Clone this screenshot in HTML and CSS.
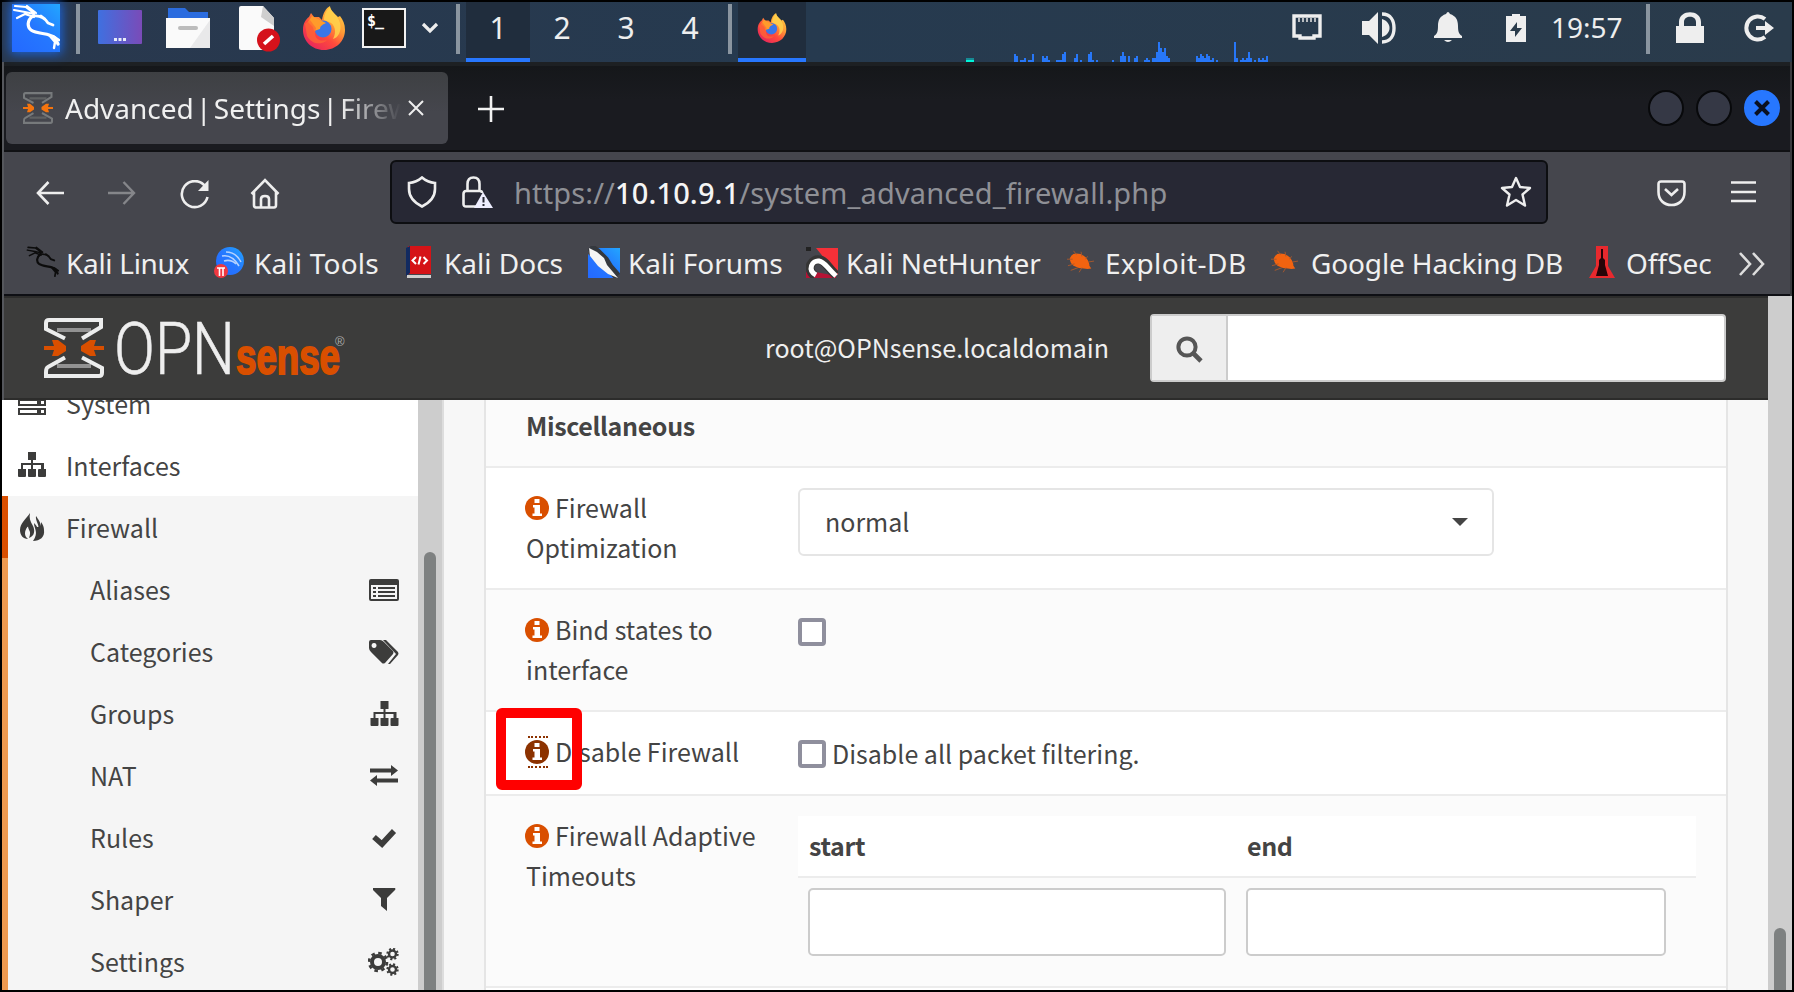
FILE: index.html
```html
<!DOCTYPE html>
<html lang="en">
<head>
<meta charset="utf-8">
<title>Advanced | Settings | Firewall</title>
<link rel="stylesheet" href="styles.css">
</head>
<body>
<svg class="defs" width="0" height="0">
  <defs>
    <linearGradient id="kali" x1="0" y1="1" x2="1" y2="0"><stop offset="0" stop-color="#2469ff"/><stop offset=".5" stop-color="#2577ff"/><stop offset="1" stop-color="#22a6ff"/></linearGradient>
    <linearGradient id="desk"><stop offset="0" stop-color="#3f70e0"/><stop offset="1" stop-color="#7a4bb8"/></linearGradient>
    <linearGradient id="fox" x1="1" y1="0" x2="0.2" y2="1"><stop offset="0" stop-color="#ffe14c"/><stop offset=".4" stop-color="#ff9a35"/><stop offset=".65" stop-color="#ff4a3c"/><stop offset="1" stop-color="#e5245e"/></linearGradient>
    <symbol id="firefox" viewBox="0 0 44 44">
      <path fill="url(#fox)" d="M22 44C10 44 1 35 1 24C1 17 4 13 7 11L9 7L12 11L17 11L20 14C21 7 24 2 28 0C28 4 32 7 36 11L38 10C41 14 43 18 43 24C43 35 34 44 22 44Z"/>
      <circle cx="21" cy="23" r="8.500" fill="#3a76e8"/>
      <path fill="#ff9b2b" d="M6 16L10 10L20 15L24 17C20 19 18 20 18 23L12 25L11 21Z"/>
      <path fill="#ff6a33" d="M3 18L8 14L14 22L13 27C13 33 18 36 25 34C20 39 10 39 5 30Z" opacity=".7"/>
      <path fill="#ffd24c" d="M28 1C29 6 36 9 38 17C40 25 36 32 31 33C35 26 33 18 27 16L22 14C22 8 25 4 28 1Z" opacity=".85"/>
    </symbol>
    <symbol id="dragon" viewBox="0 0 48 48">
      <g fill="none" stroke="currentColor" stroke-linecap="round" stroke-linejoin="round">
        <path stroke-width="2.200" d="M3 2L14 3L22 9M2 6L13 8L22 10M5 14L13 10L22 13M15 2L24 9"/>
        <path stroke-width="3.200" d="M21 12C15 16 15 23 19 26C26 31 37 28 43 34L46 40"/>
        <path stroke-width="2.800" d="M21 12C28 11 33 14 36 19L41 21M29 12L33 15"/>
        <path stroke-width="2.400" d="M37 31L43 38L42 44M41 32L47 36"/>
      </g>
    </symbol>
    <symbol id="bug" viewBox="0 0 30 28">
      <path fill="#f26310" d="M3 10Q5 5 10 5Q16 5 20 9Q24 14 24 18L26 21Q22 22 18 21Q12 21 7 18Q3 15 3 10Z"/>
      <path stroke="#a8582c" stroke-width="1" fill="none" d="M7 2L10 6M15 3L16 8M22 8L20 11M29 13L23 14M1 18L8 16M4 23L12 20M13 25L16 20M0 11L6 11"/>
    </symbol>
    <symbol id="sitemap" viewBox="0 0 28 26">
      <path fill="currentColor" d="M10 0h8v8h-3v3h11v6h2v7q0 1-1 1h-6q-1 0-1-1v-6q0-1 1-1h2v-4h-8v4h3v7q0 1-1 1h-6q-1 0-1-1v-7h3v-4H5v4h3v7q0 1-1 1H1q-1 0-1-1v-7h3v-6h10v-3h-3z"/>
    </symbol>
    <symbol id="info" viewBox="0 0 24 24">
      <circle cx="12" cy="12" r="12" fill="currentColor"/>
      <path fill="#fff" d="M9.500 3h5v4h-5zM8 9h7v8.500h2V20H7.500v-2.500H9.500V11.500H8z"/>
    </symbol>
    <symbol id="gate" viewBox="0 0 60 60">
      <path class="gate-dark" fill="none" stroke-width="4" d="M13 12H47M13 48H47"/>
      <path class="gate-frame" fill="none" stroke-width="4" d="M21 20.500L2 11V5Q2 2 5 2H57V9L38 20.500M21 39.500L4 49Q2 50 2 54V58H55Q58 58 58 55V50L38 39.500"/>
      <path class="gate-arrow" d="M0 28h10L8 22h6l8 6v5l-8 5H8l2-6H0zM60 28H50L52 22h-6l-9 6v5l9 5h6l-2-6h10z"/>
    </symbol>
  </defs>
</svg>

<div class="screen">
  <div class="panel">
    <div class="kali-menu"><svg width="48" height="48"><rect width="48" height="48" fill="url(#kali)"/><use href="#dragon" width="48" height="48"/></svg></div>
    <i class="sep sep-a"></i>
    <div class="launchers">
      <svg class="l-desk" width="44" height="34"><rect width="44" height="34" rx="1" fill="url(#desk)"/><path fill="#e8ecf8" d="M16 28h3v3h-3zM20.500 28h3v3h-3zM25 28h3v3h-3z"/></svg>
      <svg class="l-files" width="44" height="40"><path fill="#2b6cdf" d="M2 0h17l4 4h19v10H2z"/><path fill="#fafafa" d="M0 10h44v30H0z"/><path fill="#e9e9ea" d="M44 12v28H24z"/><rect x="12" y="18" width="20" height="4" rx="2" fill="#bcbcbc"/></svg>
      <svg class="l-edit" width="42" height="46"><path fill="#fafafa" d="M2 0h22l11 12v32H2q-2 0-2-2V2q0-2 2-2z"/><path fill="#cfcfcf" d="M24 0l11 12v8L22 11z"/><circle cx="29.500" cy="34" r="11.500" fill="#d5121b"/><path d="M25 38l9-8" stroke="#fff" stroke-width="3.600"/></svg>
      <svg class="l-fox" width="44" height="44"><use href="#firefox"/></svg>
      <div class="l-term">$_</div>
      <svg class="l-more" width="18" height="12"><path d="M2 2l7 7 7-7" fill="none" stroke="#eee" stroke-width="3.200"/></svg>
    </div>
    <i class="sep sep-b"></i>
    <div class="spaces"><span class="space active">1</span><span class="space">2</span><span class="space">3</span><span class="space">4</span></div>
    <i class="sep sep-c"></i>
    <div class="task"><svg width="30" height="30"><use href="#firefox"/></svg></div>
    <svg class="graph" width="304" height="24"><path fill="#168b94" d="M0 20h8v2H0z"/><path fill="#00f5d9" d="M0 22h8v2H0z"/>
      <path fill="#2777f8" d="M48 24V16h2v2h2v6zM54 24v-2h4v-2h2v4zM62 24v-2h4v-6h2v8zM76 24v-6h2v2h2v-2h2v4h2v2zM90 24v-2h6v-6h2v-2h2v10zM108 24v-4h2v-4h2v8zM114 22h2v2h-2zM122 24v-8h2v-2h2v8h2v2zM130 22h2v2h-2zM146 22h2v2h-2zM154 24v-6h2v-4h2v4h2v6zM162 18h2v6h-2zM168 24v-4h2v-2h2v6zM178 24v-2h2v-2h2v2h2v2zM186 24v-4h4v-6h2V4h2v6h2v4h2v-4h2v8h2v2h2v4zM230 24v-6h2v2h2v-4h2v2h2v2h2v-4h2v2h2v6zM244 24v-2h2v-2h2v4zM250 22h2v2h-2zM268 24V4h2v16h2v4zM274 24v-2h2v-2h2v2h2v-2h2v-6h2v6h2v4zM288 22h2v2h-2zM292 24v-4h2v2h2v-2h2v2h2v-4h2v6z"/></svg>
    <div class="tray">
      <svg class="t-net" width="30" height="26"><path fill="none" stroke="#eee" stroke-width="3.400" d="M2 2H28V22H22V24H8V22H2Z"/><path stroke="#ddd" stroke-width="1.600" d="M7 4v4M11 4v4M15 4v4M19 4v4M23 4v4"/></svg>
      <svg class="t-vol" width="35" height="32"><path fill="#eee" d="M0 9h7L16 0v32L7 23H0z"/><path fill="none" stroke="#eee" stroke-width="3.400" d="M20 2C29 2 32 9 32 16S29 30 20 30"/><path fill="#eee" d="M20 7C30 10 30 22 20 25z"/></svg>
      <svg class="t-bell" width="28" height="31"><path fill="#eee" d="M12 2q2-4 4 0C22 4 24 8 24 14C24 20 25 22 28 24v2H0v-2C3 22 4 20 4 14C4 8 6 4 12 2zM10 28h8q-4 4-8 0z"/></svg>
      <svg class="t-bat" width="20" height="28"><path fill="#eee" d="M6 0h8v2h6v26H0V2h6z"/><path fill="#2a3b4b" d="M11 8L4 17h5v6l7-9h-5z"/></svg>
      <span class="clock">19:57</span>
      <i class="sep sep-d"></i>
      <svg class="t-lock" width="28" height="31"><path fill="#eee" d="M0 14h3V10C3-3 25-3 25 10v4h3v17H0zM8 14h12v-4C20 3 8 3 8 10z"/></svg>
      <svg class="t-out" width="30" height="28"><path fill="none" stroke="#eee" stroke-width="4" d="M21 5A11.500 11.500 0 1 0 21 23"/><path fill="#eee" d="M12 12h9V7l9 7-9 7v-5h-9z"/></svg>
    </div>
  </div>

  <div class="browser">
    <div class="titlebar">
      <div class="tab">
        <svg class="tab-icon" width="30" height="32" viewBox="0 0 60 60" preserveAspectRatio="none"><use href="#gate"/></svg>
        <span class="tab-title">Advanced | Settings | Firewall</span>
        <svg class="tab-close" width="16" height="16"><path d="M1 1L15 15M15 1L1 15" stroke="#eee" stroke-width="2"/></svg>
      </div>
      <svg class="newtab" width="26" height="26"><path d="M13 0V26M0 13H26" stroke="#f2f2f2" stroke-width="2.600"/></svg>
      <div class="winbtns"><i class="wb"></i><i class="wb"></i><i class="wb close"><svg width="16" height="16"><path d="M1.500 1.500L14.500 14.500M14.500 1.500L1.500 14.500" stroke="#0a1020" stroke-width="4"/></svg></i></div>
    </div>

    <div class="navbar">
      <svg class="n-back" width="28" height="24"><path d="M12.500 1L2 12L12.500 23M2 12H28" fill="none" stroke="#eee" stroke-width="2.600"/></svg>
      <svg class="n-fwd" width="28" height="24"><path d="M15.500 1L26 12L15.500 23M0 12H26" fill="none" stroke="#85868a" stroke-width="2.400"/></svg>
      <svg class="n-reload" width="30" height="30"><path d="M25 6A13 13 0 1 0 27.500 17" fill="none" stroke="#eee" stroke-width="2.600"/><path fill="#eee" d="M28.500 0V11H18Z"/></svg>
      <svg class="n-home" width="30" height="31"><path d="M1.500 16L15 2L28.500 16M4 14V27Q4 29.500 6 29.500H24Q26 29.500 26 27V14M11 29V21Q11 18 15 18T19 21V29" fill="none" stroke="#eee" stroke-width="2.600"/></svg>
      <div class="urlbar">
        <svg class="u-shield" width="30" height="32"><path d="M15 1.500C11 5 7 6.500 2 7V13C2 22 8 27 15 30.500C22 27 28 22 28 13V7C23 6.500 19 5 15 1.500Z" fill="none" stroke="#eee" stroke-width="2.600"/></svg>
        <svg class="u-lock" width="31" height="32"><path d="M14 30.500H4Q1.500 30.500 1.500 28V18Q1.500 15 4 15H18Q20 15 20 17M5.500 15V8Q5.500 1.500 11.500 1.500T17.500 8V15" fill="none" stroke="#eee" stroke-width="2.600"/><path fill="#eef" d="M21 16L31 32H12Z"/><path stroke="#272834" stroke-width="2" d="M21.500 21V26.500M21.500 28V30"/></svg>
        <span class="url">https://<b>10.10.9.1</b>/system_advanced_firewall.php</span>
        <svg class="u-star" width="32" height="32" viewBox="0 0 32 32"><path d="M16 2L20 11L30 12L22.500 18.500L25 29.500L16 24L7 29.500L9.500 18.500L2 12L12 11Z" fill="none" stroke="#eee" stroke-width="2.400" stroke-linejoin="round"/></svg>
      </div>
      <svg class="n-pocket" width="29" height="27"><path d="M1.500 4Q1.500 1.500 4 1.500H25Q27.500 1.500 27.500 4V12C27.500 20 22 25 14.500 25S1.500 20 1.500 12ZM8 9L14.500 15L21 9" fill="none" stroke="#eee" stroke-width="2.600"/></svg>
      <svg class="n-menu" width="25" height="22"><path d="M0 1.500H25M0 11H25M0 20H25" stroke="#eee" stroke-width="2.600"/></svg>
    </div>

    <div class="bookmarks">
      <div class="bm bm1"><svg class="dark" width="33" height="33"><use href="#dragon"/></svg><span>Kali Linux</span></div>
      <div class="bm bm2"><svg width="30" height="32"><circle cx="16" cy="15" r="14" fill="url(#kali)"/><path d="M8 10Q18 8 25 20M12 6Q22 6 27 16M10 15Q17 13 22 18" fill="none" stroke="#b5d2ff" stroke-width="1.600"/><circle cx="7" cy="25" r="7" fill="#ef3840"/><path d="M3 22H11M5.500 22V30M9 22V30" stroke="#fff" stroke-width="1.600"/></svg><span>Kali Tools</span></div>
      <div class="bm bm3"><svg width="26" height="32"><path fill="#d51317" d="M2 0H25V28H2z"/><path fill="#122a60" d="M0 2L4 0V27L0 30z"/><path fill="#cfcfcf" d="M1 29H25v3H1z"/><path d="M10 11L6.500 14.500L10 18M17.500 11L21 14.500L17.500 18M14.500 10.500L12.500 18.500" fill="none" stroke="#fff" stroke-width="2"/></svg><span>Kali Docs</span></div>
      <div class="bm bm4"><svg width="32" height="32"><path fill="url(#kali)" d="M0 8V32H26zM8 2H32V28z"/><path d="M2 1L9 6L17 14L22 22L29 30" fill="none" stroke="#34383e" stroke-width="8"/><path fill="#f4f4f4" d="M1 2L9 6L16 12L19 19L30 32L20 28L10 20L2 10z"/></svg><span>Kali Forums</span></div>
      <div class="bm bm5"><svg width="32" height="32"><path fill="#f53038" d="M10 2H32V29z"/><path fill="#b51335" d="M0 32V24L30 30V32z"/><path d="M9 30C-1 23 6 12 14 14C20 15 20 20 30 29" fill="none" stroke="#353535" stroke-width="9"/><path d="M10 29C1 24 6 14 13 15C19 16 20 21 30 30" fill="none" stroke="#fff" stroke-width="5"/><path fill="#222" d="M0 1H5V5H0z"/></svg><span>Kali NetHunter</span></div>
      <div class="bm bm6"><svg width="28" height="28"><use href="#bug"/></svg><span>Exploit-DB</span></div>
      <div class="bm bm7"><svg width="28" height="28"><use href="#bug"/></svg><span>Google Hacking DB</span></div>
      <div class="bm bm8"><svg width="26" height="32"><path fill="#e8292e" d="M7 0H19V20L26 32H0L7 20z"/><path fill="#260408" d="M12 3H14V12L16 14V19L19 30H7L10 19V14L12 12z"/></svg><span>OffSec</span></div>
      <svg class="bm-more" width="26" height="24"><path d="M1 1L11 12L1 23M14 1L24 12L14 23" fill="none" stroke="#ddd" stroke-width="2.600"/></svg>
    </div>

    <div class="page">
      <div class="main">
        <header class="head">
          <svg class="brand" width="300" height="64"><svg class="gate-light" x="0" y="0" width="60" height="60" viewBox="0 0 60 60"><use href="#gate"/></svg>
            <text class="brand-opn" x="70" y="55.500" textLength="121" lengthAdjust="spacingAndGlyphs">OPN</text>
            <text class="brand-sense" x="192" y="55.500" textLength="104" lengthAdjust="spacingAndGlyphs">sense</text><text class="brand-r" x="291" y="28">®</text></svg>
          <span class="user">root@OPNsense.localdomain</span>
          <div class="search"><span class="search-icon"><svg width="28" height="28"><circle cx="11" cy="11" r="8.600" fill="none" stroke="#555" stroke-width="4"/><path d="M17 17L25 25" stroke="#555" stroke-width="4.600"/></svg></span><span class="search-input"></span></div>
        </header>
        <div class="body">
          <nav class="side">
            <div class="item clipped"><svg width="28" height="26"><path fill="#3c3c3b" d="M0 0h28v7H0zM0 9h28v7H0zM0 18h28v7H0z"/><path fill="#fff" d="M2 11h17v3H2zM2 20h17v3H2zM23 11h3v3h-3zM23 20h3v3h-3z"/></svg><span>System</span></div>
            <div class="item"><svg width="28" height="26"><use href="#sitemap"/></svg><span>Interfaces</span></div>
            <div class="item current"><svg width="28" height="28"><path fill="#3c3c3b" d="M12 0C8 6 2 10 2 17C2 22 5 26 10 26C6 23 6 18 10 13C10 18 14 17 11 25C17 23 17 17 15 13C12 8 11 5 12 0zM18 3C17 8 22 12 20 16C19 13 17 11 16 10C16 16 21 19 15 28C22 28 27 24 26 17C26 14 25 12 23 9L23 13C22 8 20 6 18 3z"/><path fill="#3c3c3b" d="M3 16Q8 12 11 6L13 12L9 14Q5 18 7 24Q3 22 3 16zM19 14L24 14Q25 21 19 26z"/></svg><span>Firewall</span></div>
            <div class="sub">
              <div class="item"><span>Aliases</span><svg width="30" height="22"><path fill="#3c3c3b" fill-rule="evenodd" d="M2 0H28Q30 0 30 2V20Q30 22 28 22H2Q0 22 0 20V2Q0 0 2 0zM2 6V20H28V6z"/><path stroke="#3c3c3b" stroke-width="1.800" d="M4 9h3M9 9h17M4 13h3M9 13h17M4 17h3M9 17h17"/></svg></div>
              <div class="item"><span>Categories</span><svg width="30" height="24"><path fill="#3c3c3b" fill-rule="evenodd" d="M2 0H11Q13 0 15 2L24 11Q25 13 24 14L16 23Q14 24 13 23L2 12Q0 10 0 8V2Q0 0 2 0zM5 3a2.500 2.500 0 1 0 .1 0z"/><path fill="#3c3c3b" d="M14 0H17L29 12Q30 14 29 15L21 24H19L27 14z"/></svg></div>
              <div class="item"><span>Groups</span><svg width="29" height="26"><use href="#sitemap"/></svg></div>
              <div class="item"><span>NAT</span><svg width="30" height="21"><path fill="#3c3c3b" d="M1 3.500H22V0L29 5.500L22 11V7.500H1zM29 13.500H8V10L1 15.500L8 21V17.500H29z"/></svg></div>
              <div class="item"><span>Rules</span><svg width="30" height="20"><path d="M5 9L13 16L25 3" fill="none" stroke="#3c3c3b" stroke-width="5.600"/></svg></div>
              <div class="item"><span>Shaper</span><svg width="30" height="23"><path fill="#3c3c3b" d="M4 0H26Q27 1 26 2L18 10V23L12 18V10L4 2z"/></svg></div>
              <div class="item"><span>Settings</span><svg width="31" height="28"><g fill="none" stroke="#3c3c3b"><circle cx="10" cy="14" r="6" stroke-width="4"/><circle cx="10" cy="14" r="9" stroke-width="2.600" stroke-dasharray="3.530"/><circle cx="24.500" cy="6" r="3.500" stroke-width="2.400"/><circle cx="24.500" cy="6" r="5.200" stroke-width="2" stroke-dasharray="2.040"/><circle cx="24.500" cy="21.500" r="3.500" stroke-width="2.400"/><circle cx="24.500" cy="21.500" r="5.200" stroke-width="2" stroke-dasharray="2.040"/></g></svg></div>
            </div>
          </nav>
          <div class="side-scroll"><i></i></div>
          <div class="content">
            <div class="table">
              <div class="row r-head alt"><b>Miscellaneous</b></div>
              <div class="row r-opt"><div class="label"><svg class="info" width="24" height="24"><use href="#info"/></svg>Firewall<br>Optimization</div><div class="select"><span>normal</span><i class="caret"></i></div></div>
              <div class="row r-bind alt"><div class="label"><svg class="info" width="24" height="24"><use href="#info"/></svg>Bind states to<br>interface</div><i class="check"></i></div>
              <div class="row r-dis"><div class="label"><svg class="info focus" width="24" height="24"><use href="#info"/></svg>Disable Firewall<i class="focus-ring"></i><i class="mark"></i></div><i class="check"></i><span class="check-label">Disable all packet filtering.</span></div>
              <div class="row r-adapt alt"><div class="label"><svg class="info" width="24" height="24"><use href="#info"/></svg>Firewall Adaptive<br>Timeouts</div>
                <div class="inner"><div class="inner-head"><b>start</b><b>end</b></div><div class="inner-row"><i class="field"></i><i class="field wide"></i></div></div></div>
              <div class="row r-next"></div>
            </div>
          </div>
        </div>
      </div>
      <div class="page-scroll"><i></i></div>
    </div>
  </div>
</div>
</body>
</html>
```
FILE: styles.css
```css
* { box-sizing: border-box; }
body { margin: 0; background: #000; font-family: "Noto Sans", sans-serif; overflow: hidden; }
i { font-style: normal; display: block; flex: none; }
svg { display: block; flex: none; }
.defs { position: absolute; }
.screen { width: 1794px; height: 992px; padding: 2px; background: #000; overflow: hidden; }

/* desktop panel */
.panel { height: 60px; display: flex; align-items: flex-start; background: linear-gradient(90deg, #29384e, #263a4f 45%, #2a3b4b); color: #eee; }
.kali-menu { margin: 2px 0 0 10px; color: #fff; box-shadow: 0 0 10px 2px #1c63d8; }
.sep { width: 4px; height: 50px; margin-top: 2px; background: #8a95a0; }
.sep-a { margin-left: 16px; }
.launchers { display: flex; width: 376px; }
.l-desk { margin: 8px 0 0 18px; }
.l-files { margin: 6px 0 0 24px; }
.l-edit { margin: 4px 0 0 29px; }
.l-fox { margin: 4px 0 0 21px; }
.l-term { width: 44px; height: 40px; margin: 6px 0 0 16px; border: 2px solid #f2f2f2; background: #181818; color: #fff; font: bold 15px/23px "DejaVu Sans Mono", monospace; padding-left: 3px; letter-spacing: -1px; }
.l-more { margin: 20px 0 0 15px; }
.sep-b { margin-left: 0; }
.spaces { display: flex; margin-left: 6px; }
.space { width: 64px; height: 60px; text-align: center; font-size: 30px; line-height: 51px; }
.space.active { background: #202d3d; border-bottom: 4px solid #2777ff; }
.sep-c { margin-left: 6px; }
.task { margin-left: 6px; width: 68px; height: 60px; background: #202d3d; border-bottom: 4px solid #2777ff; padding: 11px 0 0 19px; }
.graph { margin: 36px 0 0 160px; }
.tray { display: flex; }
.t-net { margin: 12px 0 0 22px; }
.t-vol { margin: 10px 0 0 40px; }
.t-bell { margin: 10px 0 0 37px; }
.t-bat { margin: 12px 0 0 44px; }
.clock { margin-left: 25px; width: 72px; font-size: 28px; line-height: 50px; white-space: nowrap; }
.sep-d { margin-left: 23px; }
.t-lock { margin: 10px 0 0 26px; }
.t-out { margin: 12px 0 0 40px; }

/* browser chrome */
.browser { height: 928px; border-left: 2px solid #55575c; border-right: 2px solid #3a3b3e; color: #f0f0f0; }
.titlebar { height: 90px; border-top: 4px solid #1d2023; border-bottom: 2px solid #101114; background: linear-gradient(#15171a, #1a1b20 40%); display: flex; }
.tab { width: 442px; height: 72px; margin: 6px 0 0 2px; border-radius: 6px; background: linear-gradient(#3e4043, #45464d 55%); display: flex; align-items: center; }
.tab-icon { margin: 0 0 0 17px; --f: #777a7c; --d: #5f6163; --a: #f4740e; }
.gate-frame { stroke: var(--f); }
.gate-dark { stroke: var(--d); }
.gate-arrow { fill: var(--a); }
.tab-title { margin-left: 12px; width: 336px; font-size: 28px; line-height: 73px; word-spacing: -5px; white-space: nowrap; overflow: hidden; -webkit-mask-image: linear-gradient(90deg, #000 82%, transparent 100%); mask-image: linear-gradient(90deg, #000 82%, transparent 100%); }
.tab-close { margin-left: 7px; }
.newtab { margin: 30px 0 0 30px; }
.winbtns { display: flex; gap: 12px; margin: 24px 0 0 1144px; }
.wb { width: 36px; height: 36px; border-radius: 50%; background: #353845; border: 2px solid #08090b; }
.wb.close { background: #2777ff; border-color: #2777ff; padding: 8px; }
.navbar { height: 78px; background: #45464d; display: flex; align-items: flex-start; }
.n-back { margin: 29px 0 0 32px; }
.n-fwd { margin: 29px 0 0 44px; }
.n-reload { margin: 28px 0 0 44px; }
.n-home { margin: 26px 0 0 40px; }
.urlbar { margin: 8px 0 0 110px; width: 1158px; height: 64px; border: 2px solid #0d0e11; border-radius: 6px; background: #272834; display: flex; }
.u-shield { margin: 14px 0 0 15px; }
.u-lock { margin: 14px 0 0 25px; }
.url { margin-left: 21px; width: 985px; font-size: 29px; letter-spacing: .13px; line-height: 61px; color: #8f9096; white-space: nowrap; }
.url b { font-weight: 500; color: #f5f5f5; }
.u-star { margin: 14px 0 0 1px; }
.n-pocket { margin: 28px 0 0 109px; }
.n-menu { margin: 29px 0 0 45px; }
.bookmarks { height: 64px; background: #45464d; display: flex; }
.bm { display: flex; align-items: center; height: 66px; font-size: 28px; line-height: 66px; white-space: nowrap; }
.bm > svg { margin-bottom: 2px; }
.bm1 { width: 188px; padding-left: 22px; gap: 7px; letter-spacing: -.3px; }
.bm2 { width: 192px; padding-left: 22px; gap: 10px; letter-spacing: .2px; }
.bm3 { width: 180px; padding-left: 22px; gap: 12px; }
.bm4 { width: 217px; padding-left: 24px; gap: 8px; }
.bm5 { width: 260px; padding-left: 25px; gap: 8px; }
.bm6 { width: 206px; padding-left: 26px; gap: 10px; letter-spacing: .5px; }
.bm7 { width: 318px; padding-left: 24px; gap: 12px; letter-spacing: -.13px; }
.bm8 { width: 174px; padding-left: 24px; gap: 11px; }
.dark { color: #0c0c0c; }
.bm-more { margin-top: 22px; }

/* web page */
.page { height: 696px; border-top: 2px solid #0e0f14; display: flex; font-family: "Noto Sans CJK SC", sans-serif; font-size: 25px; color: #444; background: #fff; }
.main { width: 1764px; height: 694px; flex: none; }
.head { height: 104px; background: #3c3c3b; border-top: 2px solid #2c2c2b; border-bottom: 2px solid #2c2c2b; display: flex; }
.brand { margin: 20px 0 0 40px; overflow: visible; }
.gate-light { --f: #eceded; --d: #929292; --a: #d94f00; }
.brand-opn { font: 300 72px Roboto, sans-serif; fill: #eee; stroke: #eee; stroke-width: .6; }
.brand-sense { font: bold 50px "Liberation Sans", sans-serif; fill: #d94f00; stroke: #d94f00; stroke-width: 2; }
.brand-r { font: 13px "Liberation Sans", sans-serif; fill: #aaa; }
.user { margin-left: 421px; width: 385px; color: #efefef; line-height: 99px; white-space: nowrap; }
.search { margin-top: 16px; width: 576px; height: 68px; border: 2px solid #ccc; border-radius: 4px; display: flex; background: #fff; }
.search-icon { width: 76px; border-right: 2px solid #ccc; background: #eee; padding: 20px 0 0 24px; }
.body { display: flex; height: 590px; margin-left: -2px; }
.side { width: 416px; height: 590px; overflow: hidden; background: #fff; flex: none; }
.item { height: 62px; line-height: 62px; display: flex; align-items: center; padding-left: 16px; gap: 20px; white-space: nowrap; }
.item svg { color: #3c3c3b; }
.item.clipped { margin-top: -28px; }
.item.current, .sub { background: #f5f5f5; border-left: 6px solid #d94f00; padding-left: 10px; }
.sub { border-color: #ee9a50; padding-left: 0; }
.sub .item { padding: 0 19px 0 82px; justify-content: space-between; }
.sub .item svg { margin-top: 1px; }
.side-scroll { width: 26px; height: 590px; background: #cdcdcd; border-right: 2px solid #ddd; padding: 152px 0 0 6px; overflow: hidden; flex: none; }
.side-scroll i { width: 12px; height: 460px; border-radius: 6px; background: #7e8181; }
.content { flex: 1; background: #f7f7f7; padding-left: 40px; height: 590px; overflow: hidden; }
.table { width: 1244px; border: solid #e5e5e5; border-width: 0 2px; background: #fff; }
.row { display: flex; align-items: flex-start; padding-left: 40px; border-bottom: 2px solid #ececec; line-height: 40px; }
.row b { letter-spacing: -.35px; }
.alt { background: #fbfbfb; }
.r-head { height: 68px; padding-top: 5px; }
.r-opt, .r-bind { height: 122px; }
.r-dis { height: 84px; }
.r-adapt { height: 192px; }
.r-next { height: 10px; border: 0; }
.label { width: 272px; flex: none; padding-top: 19px; white-space: nowrap; position: relative; }
.info { display: inline-block; margin: 0 6px 0 -1px; vertical-align: -2px; color: #d94f00; }
.info.focus { color: #8c3200; }
.focus-ring { position: absolute; left: 2px; top: 24px; width: 20px; height: 32px; border: dotted #8c3200; border-width: 2px 0; }
.mark { position: absolute; left: -30px; top: -4px; width: 86px; height: 82px; border: 10px solid #f00; border-radius: 6px; }
.select { margin-top: 20px; width: 696px; height: 68px; border: 2px solid #e5e5e5; border-radius: 6px; background: #fff; display: flex; justify-content: space-between; padding: 0 24px 0 25px; line-height: 62px; }
.caret { border: 8px solid transparent; border-top-color: #444; border-bottom: 0; margin-top: 28px; }
.check { width: 28px; height: 28px; margin-top: 28px; border: 4px solid #8f8f9d; border-radius: 4px; background: #fff; }
.check-label { margin: 21px 0 0 6px; }
.inner { margin-top: 20px; width: 898px; }
.inner-head { height: 62px; background: #fff; border-bottom: 2px solid #ececec; display: flex; line-height: 58px; padding-left: 11px; }
.inner-head b { width: 438px; }
.inner-row { display: flex; gap: 20px; padding: 10px 0 0 10px; }
.field { width: 418px; height: 68px; border: 2px solid #ccc; border-radius: 5px; background: #fff; }
.field.wide { width: 420px; }
.page-scroll { width: 24px; height: 694px; background: #cdcdcd; padding: 632px 0 0 6px; flex: none; overflow: hidden; }
.page-scroll i { width: 12px; height: 80px; border-radius: 6px; background: #7e8181; }
```
